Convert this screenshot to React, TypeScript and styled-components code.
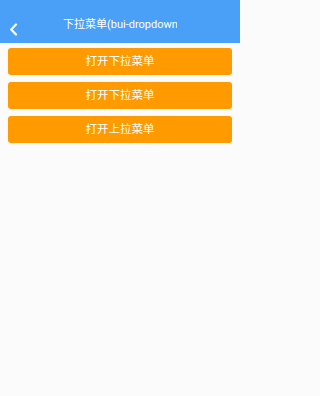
import React from "react";
import styled, {createGlobalStyle} from "styled-components";

const GlobalStyle = createGlobalStyle`
  html, body {
    margin: 0;
    padding: 0;
    background: #fbfbfb;
    font-family: Roboto, "Noto Sans CJK SC", sans-serif;
  }
`;

const buttons = ["打开下拉菜单", "打开下拉菜单", "打开上拉菜单"];

export default function App() {
  return (
    <Page>
      <GlobalStyle />
      <Header>
        <Back>
          <svg width="9" height="13" viewBox="0 0 9 13">
            <path d="M7 1.5L2.2 6.5L7 11.5" fill="none" stroke="#fff" strokeWidth="2.2" strokeLinecap="round" strokeLinejoin="round" />
          </svg>
        </Back>
        <Title>下拉菜单(bui-dropdown)</Title>
      </Header>
      <Content>
        {buttons.map((label, i) => (
          <Button key={i}>{label}</Button>
        ))}
      </Content>
    </Page>
  );
}

const Page = styled.div`
  width: 240px;
  min-height: 396px;
  background: #fbfbfb;
`;

const Header = styled.div`
  position: relative;
  display: flex;
  align-items: flex-end;
  justify-content: center;
  height: 43px;
  padding-bottom: 5px;
  box-sizing: border-box;
  background-color: #4a9ff6;
`;

const Back = styled.div`
  position: absolute;
  left: 9px;
  bottom: 7px;
  display: flex;
`;

const Title = styled.div`
  width: 114px;
  height: 26px;
  line-height: 26px;
  overflow: hidden;
  white-space: nowrap;
  color: #fff;
  font-size: 11px;
`;

const Content = styled.div`
  display: flex;
  flex-direction: column;
  gap: 7px;
  padding: 5px 8px;
`;

const Button = styled.div`
  height: 27px;
  line-height: 27px;
  border-radius: 3px;
  background-color: #ff9b00;
  color: #fff;
  text-align: center;
  font-size: 11.5px;
`;
